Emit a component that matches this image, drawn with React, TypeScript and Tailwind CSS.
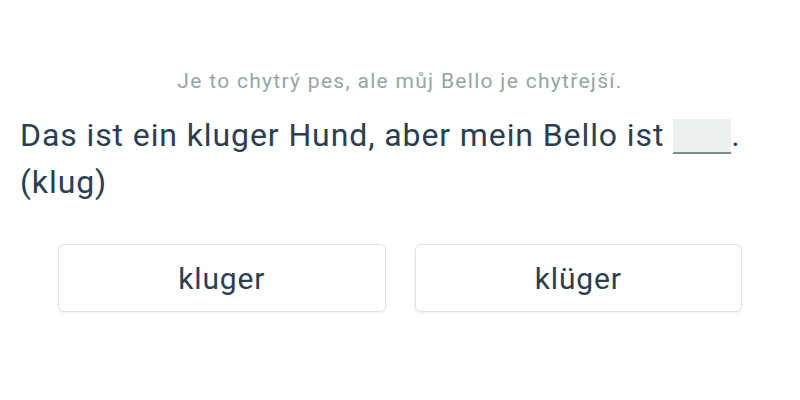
import React from 'react';

const options = ['kluger', 'klüger'];

export default function App() {
  return (
    <div className="w-[800px] h-[400px] bg-white font-['Roboto',sans-serif] flex flex-col">
      <p className="mt-[67px] text-center text-[21px] tracking-[1.3px] leading-[28px] text-[#95a5a6]">
        Je to chytrý pes, ale můj Bello je chytřejší.
      </p>
      <p className="mt-[17px] px-[20px] text-[32px] tracking-[0.9px] leading-[47px] text-[#2c3e50]">
        Das ist ein kluger Hund, aber mein Bello ist{' '}
        <span className="inline-block align-[-8px] w-[58px] h-[35px] bg-[#ecf0f1] border-b-2 border-[#7f8c8d]" />
        .
        <br />
        (klug)
      </p>
      <div className="mt-[38px] px-[58px] grid grid-cols-2 gap-[29px]">
        {options.map((o) => (
          <button
            key={o}
            className="h-[68px] rounded-md border border-[#dfe3e6] bg-white shadow-[0_1px_3px_rgba(0,0,0,0.08)] text-[30px] tracking-[0.8px] text-[#2c3e50]"
          >
            {o}
          </button>
        ))}
      </div>
    </div>
  );
}
